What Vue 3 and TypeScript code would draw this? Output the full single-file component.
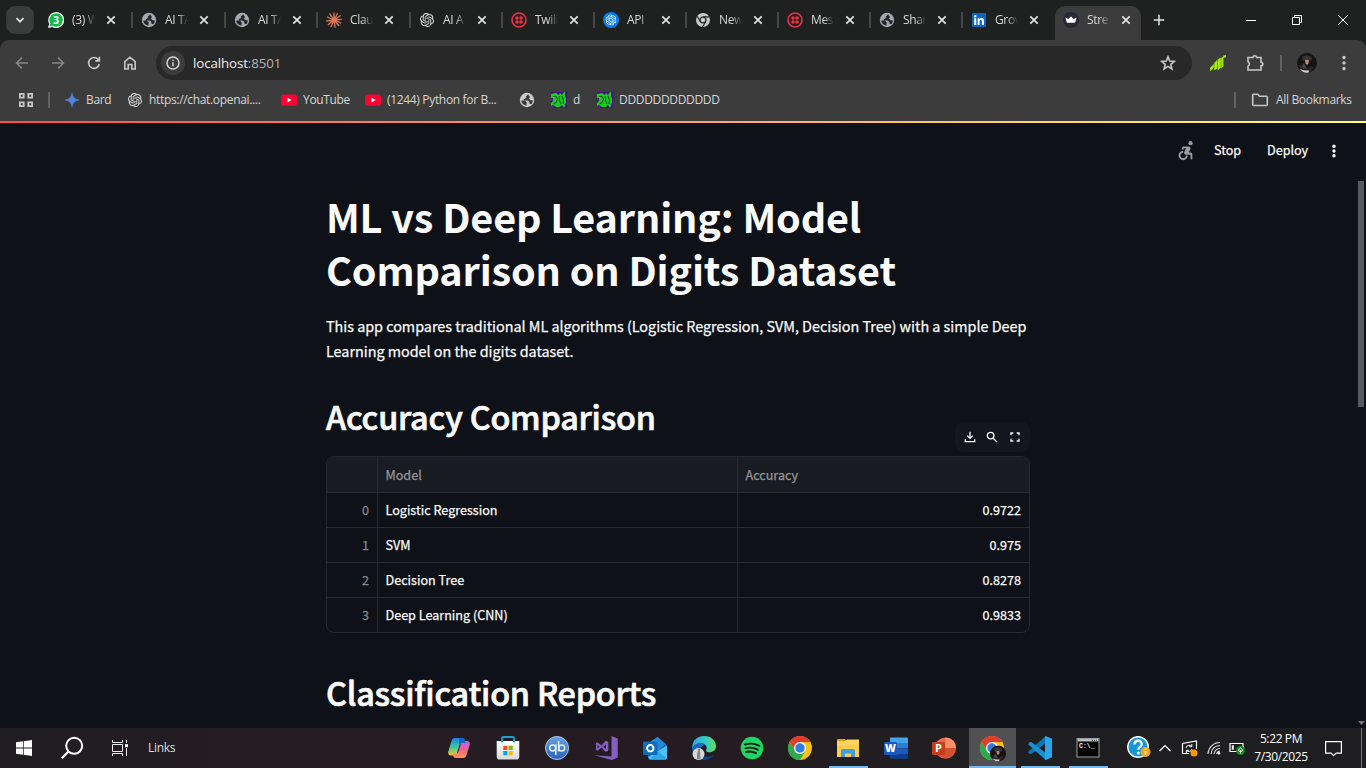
<script setup lang="ts">
interface Tab { icon: string; title: string; active?: boolean }
interface Bookmark { icon: string; title: string }
interface TaskApp { icon: string; state?: 'open' | 'focused' }
interface Row { model: string; accuracy: string }

const tabs: Tab[] = [
  { icon: 'whatsapp', title: '(3) W' },
  { icon: 'globe', title: 'AI TA' },
  { icon: 'globe', title: 'AI TA' },
  { icon: 'claude', title: 'Clau' },
  { icon: 'openai', title: 'AI A' },
  { icon: 'twilio', title: 'Twili' },
  { icon: 'openai-blue', title: 'API' },
  { icon: 'chrome-grey', title: 'New' },
  { icon: 'twilio', title: 'Mes' },
  { icon: 'globe', title: 'Shar' },
  { icon: 'linkedin', title: 'Grov' },
  { icon: 'crown', title: 'Stre', active: true },
]

const bookmarks: Bookmark[] = [
  { icon: 'bard', title: 'Bard' },
  { icon: 'openai', title: 'https://chat.openai....' },
  { icon: 'youtube', title: 'YouTube' },
  { icon: 'youtube', title: '(1244) Python for B...' },
  { icon: 'globe-light', title: '' },
  { icon: 'dn', title: 'd' },
  { icon: 'dn', title: 'DDDDDDDDDDDD' },
]

const apps: TaskApp[] = [
  { icon: 'copilot' }, { icon: 'store' }, { icon: 'qb' }, { icon: 'vs' }, { icon: 'outlook' },
  { icon: 'edge' }, { icon: 'spotify' }, { icon: 'chrome' }, { icon: 'explorer', state: 'open' },
  { icon: 'word' }, { icon: 'powerpoint' }, { icon: 'chrome-profile', state: 'focused' },
  { icon: 'vscode', state: 'open' }, { icon: 'terminal', state: 'open' },
]

const rows: Row[] = [
  { model: 'Logistic Regression', accuracy: '0.9722' },
  { model: 'SVM', accuracy: '0.975' },
  { model: 'Decision Tree', accuracy: '0.8278' },
  { model: 'Deep Learning (CNN)', accuracy: '0.9833' },
]
</script>

<template>
  <div class="screen">
    <svg class="sprite" width="0" height="0" aria-hidden="true">
      <defs>
        <linearGradient id="gBard" x1="0" x2="1"><stop offset="0" stop-color="#9b72cb" /><stop offset=".5" stop-color="#4a86e0" /><stop offset="1" stop-color="#3f8fe0" /></linearGradient>
        <linearGradient id="gCopA" x1="0" y1="0" x2="0" y2="1"><stop offset="0" stop-color="#1b7fe6" /><stop offset=".5" stop-color="#3cc6a0" /><stop offset="1" stop-color="#f6c52c" /></linearGradient>
        <linearGradient id="gCopB" x1="0" y1="0" x2="0" y2="1"><stop offset="0" stop-color="#b065e8" /><stop offset=".5" stop-color="#f0608c" /><stop offset="1" stop-color="#ff9a4d" /></linearGradient>
        <linearGradient id="gQb" x1="0" y1="0" x2="0" y2="1"><stop offset="0" stop-color="#6aa2e6" /><stop offset="1" stop-color="#2a63b8" /></linearGradient>
        <linearGradient id="gEdge" x1="0" y1="0" x2="1" y2="0"><stop offset="0" stop-color="#2aa8e8" /><stop offset=".55" stop-color="#36c9c8" /><stop offset="1" stop-color="#62dd58" /></linearGradient>
        <linearGradient id="gStore" x1="0" y1="0" x2="0" y2="1"><stop offset="0" stop-color="#fff" /><stop offset="1" stop-color="#d9d9db" /></linearGradient>
        <symbol id="whatsapp" viewBox="0 0 16 16"><path d="M0 16 1.200 11.800A8 8 0 1 1 4.300 15z" fill="#fff" /><path d="M1.600 14.400 2.400 11.500A6.700 6.700 0 1 1 4.600 13.700z" fill="#12b84a" /><text x="8" y="11.700" text-anchor="middle" font-family="Open Sans, sans-serif" font-size="10" font-weight="700" fill="#fff">3</text></symbol>
        <symbol id="globe" viewBox="0 0 16 16"><circle cx="8" cy="8" r="7.200" fill="#a4a9b1" /><path d="M2.200 8.600H5.800L7.800 10.600 7.400 13.600C4.500 13.200 2.500 11.500 2.200 8.600zM9.200 2.400 6.800 4.300 7.300 5.800 4.800 7.200 5.200 8.600H8.800L10.500 10.200V11.900H12.600C13.400 11 13.800 9.800 13.700 8.300H11.400L9.900 6.600 11 4.900z" fill="#23272b" /></symbol>
        <symbol id="globe-light" viewBox="0 0 16 16"><circle cx="8" cy="8" r="7.200" fill="#c9cbce" /><path d="M2.200 8.600H5.800L7.800 10.600 7.400 13.600C4.500 13.200 2.500 11.500 2.200 8.600zM9.200 2.400 6.800 4.300 7.300 5.800 4.800 7.200 5.200 8.600H8.800L10.500 10.200V11.900H12.600C13.400 11 13.800 9.800 13.700 8.300H11.400L9.900 6.600 11 4.900z" fill="#3c3c3c" /></symbol>
        <symbol id="claude" viewBox="0 0 16 16"><g stroke="#d97757" stroke-width="1.350" stroke-linecap="round"><path d="M8 8V.8M8 8l3.300-6.200M8 8l6.200-4.300M8 8l7.200-.6M8 8l6.700 2.800M8 8l4.700 5.500M8 8l1 7.200M8 8l-3 6.700M8 8l-5.600 4.500M8 8l-7.200 1M8 8 1.400 5M8 8 3.800 1.800" /></g></symbol>
        <symbol id="oa" viewBox="0 0 24 24"><path d="M22.2819 9.8211a5.9847 5.9847 0 0 0-.5157-4.9108 6.0462 6.0462 0 0 0-6.5098-2.9A6.0651 6.0651 0 0 0 4.9807 4.1818a5.9847 5.9847 0 0 0-3.9977 2.9 6.0462 6.0462 0 0 0 .7427 7.0966 5.98 5.98 0 0 0 .511 4.9107 6.051 6.051 0 0 0 6.5146 2.9001A5.9847 5.9847 0 0 0 13.2599 24a6.0557 6.0557 0 0 0 5.7718-4.2058 5.9894 5.9894 0 0 0 3.9977-2.9001 6.0557 6.0557 0 0 0-.7475-7.0729zm-9.022 12.6081a4.4755 4.4755 0 0 1-2.8764-1.0408l.1419-.0804 4.7783-2.7582a.7948.7948 0 0 0 .3927-.6813v-6.7369l2.02 1.1686a.071.071 0 0 1 .038.052v5.5826a4.504 4.504 0 0 1-4.4945 4.4944zm-9.6607-4.1254a4.4708 4.4708 0 0 1-.5346-3.0137l.142.0852 4.783 2.7582a.7712.7712 0 0 0 .7806 0l5.8428-3.3685v2.3324a.0804.0804 0 0 1-.0332.0615L9.74 19.9502a4.4992 4.4992 0 0 1-6.1408-1.6464zM2.3408 7.8956a4.485 4.485 0 0 1 2.3655-1.9728V11.6a.7664.7664 0 0 0 .3879.6765l5.8144 3.3543-2.0201 1.1685a.0757.0757 0 0 1-.071 0l-4.8303-2.7865A4.504 4.504 0 0 1 2.3408 7.872zm16.5963 3.8558L13.1038 8.364 15.1192 7.2a.0757.0757 0 0 1 .071 0l4.8303 2.7913a4.4944 4.4944 0 0 1-.6765 8.1042v-5.6772a.79.79 0 0 0-.407-.667zm2.0107-3.0231l-.142-.0852-4.7735-2.7818a.7759.7759 0 0 0-.7854 0L9.409 9.2297V6.8974a.0662.0662 0 0 1 .0284-.0615l4.8303-2.7866a4.4992 4.4992 0 0 1 6.6802 4.66zM8.3065 12.863l-2.02-1.1638a.0804.0804 0 0 1-.038-.0567V6.0742a4.4992 4.4992 0 0 1 7.3757-3.4537l-.142.0805L8.704 5.459a.7948.7948 0 0 0-.3927.6813zm1.0976-2.3654l2.602-1.4998 2.6069 1.4998v2.9994l-2.5974 1.4997-2.6067-1.4997Z" /></symbol>
        <symbol id="openai" viewBox="0 0 16 16"><use href="#oa" x="1" y="1" width="14" height="14" fill="#e8e8e8" /></symbol>
        <symbol id="openai-blue" viewBox="0 0 16 16"><circle cx="8" cy="8" r="8" fill="#0a7cf0" /><use href="#oa" x="2.600" y="2.600" width="10.800" height="10.800" fill="#fff" /></symbol>
        <symbol id="twilio" viewBox="0 0 16 16"><circle cx="8" cy="8" r="7" fill="none" stroke="#f22f46" stroke-width="1.600" /><g fill="#f22f46"><circle cx="6" cy="6" r="1.800" /><circle cx="10" cy="6" r="1.800" /><circle cx="6" cy="10" r="1.800" /><circle cx="10" cy="10" r="1.800" /></g></symbol>
        <symbol id="chrome-grey" viewBox="0 0 16 16"><circle cx="8" cy="8" r="7" fill="#c7c9cb" /><path d="M8 4.900h6.300M5.300 9.600 2.200 4.200M10.700 9.600 7.500 15" stroke="#202124" stroke-width="1.100" /><circle cx="8" cy="8" r="3.500" fill="#202124" /><circle cx="8" cy="8" r="2.300" fill="#c7c9cb" /></symbol>
        <symbol id="linkedin" viewBox="0 0 16 16"><rect x="1" y="1" width="14" height="14" rx="1" fill="#0a66c2" /><path d="M3.200 6.300h2V13h-2zM6.600 6.300h1.900v.9c.4-.7 1.100-1.100 2-1.100 1.900 0 2.400 1.200 2.400 3V13h-2V9.500c0-.9-.2-1.600-1-1.600-.9 0-1.300.6-1.300 1.600V13h-2z" fill="#fff" /><circle cx="4.200" cy="4.200" r="1.200" fill="#fff" /></symbol>
        <symbol id="crown" viewBox="0 0 16 16"><circle cx="8" cy="8" r="8" fill="#262738" /><path d="M2.300 5.600 5.300 7 8 4.400 10.700 7l3-1.400-1.600 5.200H3.900z" fill="#fff" /></symbol>
        <symbol id="bard" viewBox="0 0 16 16"><path d="M8 1.300C8.700 5.500 10.500 7.300 14.700 8 10.500 8.700 8.700 10.500 8 14.700 7.300 10.500 5.500 8.700 1.300 8 5.500 7.300 7.300 5.500 8 1.300z" fill="url(#gBard)" stroke="url(#gBard)" stroke-width=".7" /></symbol>
        <symbol id="youtube" viewBox="0 0 16 16"><rect y="2.500" width="16" height="11.200" rx="2.800" fill="#ff0033" /><path d="M6.500 5.700v4.700L10.600 8z" fill="#fff" /></symbol>
        <symbol id="dn" viewBox="0 0 16 16"><rect width="16" height="16" fill="#4b0a8c" /><path d="M0 2 5 1 8 3 9 1 11 3 13 0H14V5L15 6V12L13 16 11 13 9 15H5L2 13 0 14V11L2 9V6H0z" fill="#17cf1f" /><path d="M2 4.500 5 4.500 6.500 7 5 10.500 2.500 12M8.500 4 8.500 9 10 12M11 4 12.500 8 12 12" fill="none" stroke="#145a20" stroke-width="1.200" /><path d="M0 7.500H1.500M14 13 16 10M0 15H3" stroke="#6a18b0" stroke-width="1.300" /></symbol>
        <symbol id="chrome" viewBox="0 0 24 24"><circle cx="12" cy="12" r="12" fill="#fbc116" /><path d="M1.600 6A12 12 0 0 1 22.400 6H12L7 15z" fill="#e33b2e" /><path d="M1.600 6A12 12 0 0 0 12 24l5.200-9-5.200 2-5-2z" fill="#2da94f" /><circle cx="12" cy="12" r="6" fill="#fff" /><circle cx="12" cy="12" r="4.700" fill="#2d7de9" /></symbol>
        <symbol id="avatar" viewBox="0 0 20 20"><circle cx="10" cy="10" r="10" fill="#171313" /><path d="M5 4c3-2 7-2 10 1l-1 3-4-2-4 2z" fill="#39333a" /><path d="m8 7 2.500-.5 1.500 1-.6 3-1.200 1.500-1.700-1.700z" fill="#b98f80" /><path d="m1 12 6 1 3 3 4-3 3 1-3 5c-4 2-9 0-13-7z" fill="#292429" /><path d="M3 15.800c3 1.700 6 2 9 1.700l-.5 2C8 20.500 5 19 3 15.800z" fill="#dad5d7" /><path d="M6.700 10 5 14l5 2z" fill="#53494c" /></symbol>
        <symbol id="chrome-profile" viewBox="0 0 27 26"><use href="#chrome" x="0" y="0" width="24" height="24" /><use href="#avatar" x="10" y="9.500" width="16" height="16" /></symbol>
        <symbol id="copilot" viewBox="0 0 24 24"><path d="M8 2h7c2 0 2.500 1.300 3 3l.5 2h-3c-2 0-2.800 1-3.300 3L10 17c-.6 2-1.500 2.500-3.500 2.500H4C2 19.500.7 18 1.300 15.500L4.500 5C5.200 3 6 2 8 2z" fill="url(#gCopA)" /><path d="M16 22H9c-2 0-2.600-1.300-3-3l-.5-1.500h3c2 0 2.800-1 3.300-3L14 7.500C14.600 5.500 15.500 5 17.500 5H20c2 0 3.300 1.500 2.700 4L19.500 19c-.7 2-1.500 3-3.500 3z" fill="url(#gCopB)" /><path d="M12 2h3c2 0 2.500 1.300 3 3l.5 2H14l-2 1z" fill="#1763cc" /></symbol>
        <symbol id="store" viewBox="0 0 24 24"><path d="M6 6V2.500C6 1.500 6.500 1 7.500 1h9c1 0 1.500.5 1.500 1.500V6" fill="none" stroke="#1a9fd8" stroke-width="1.900" /><path d="M.7 5h22.600v16c0 1.500-1 2.600-2.500 2.600H3.200C1.700 23.600.7 22.500.7 21z" fill="url(#gStore)" /><path d="M6 3.500v3M18 3.500v3" stroke="#1a9fd8" stroke-width="1.900" /><path d="M7.300 9.800h4.200V14H7.300z" fill="#f25022" /><path d="M12.500 9.800h4.200V14h-4.200z" fill="#7fba00" /><path d="M7.300 15h4.200v4.200H7.300z" fill="#00a4ef" /><path d="M12.500 15h4.200v4.200h-4.200z" fill="#ffb900" /></symbol>
        <symbol id="qb" viewBox="0 0 24 24"><circle cx="12" cy="12" r="11.500" fill="url(#gQb)" stroke="#a9c8f0" stroke-width="1" /><g fill="none" stroke="#e7f2ff" stroke-width="1.500"><circle cx="7.700" cy="12" r="3" /><path d="M10.800 8.500V19M13.600 5v10.500" /><circle cx="16.700" cy="12" r="3" /></g></symbol>
        <symbol id="vs" viewBox="0 0 24 24"><path d="m17.500 0 6.200 2.600v18.800L18 24 0 19.300l17.500 1.200z" fill="#865fc5" /><path d="m2 7 1.500-.8 4 3.200 4.200-4.700 2.600 1v9l-2.600 1.200-4.200-4.400-4 3.200L2 14zm1.500 2v3.400l1.800-1.700zm5.800 1.700 2.600 2.200V8.500z" fill="#865fc5" fill-rule="evenodd" /></symbol>
        <symbol id="outlook" viewBox="0 0 24 24"><path d="M5 9 14.500.800 24 9v12.500a2 2 0 0 1-2 2H7a2 2 0 0 1-2-2z" fill="#1066b5" /><path d="m8 5 6.500-4 8 7-8 7L8 13z" fill="#2489d8" /><path d="m5 21 19-11.500V21.500a2 2 0 0 1-2 2H7z" fill="#4cc2f1" /><path d="m14.500 15 9.500 7.500-2 1H7z" fill="#2ba7e8" /><rect y="5.500" width="14.500" height="13.500" rx="1" fill="#0f6cbd" /><circle cx="7.300" cy="12.200" r="3.200" fill="none" stroke="#fff" stroke-width="1.900" /></symbol>
        <symbol id="edge" viewBox="0 0 24 24"><path d="M.5 14C-1 5 5 0 12 0c7.500 0 12 5 12 10.300 0 3.700-3 6-6.500 6-2.500 0-3.800-1-3.300-2.300C16 9 11.500 7.500 9 7.500 4 7.500 1 11 .5 14z" fill="url(#gEdge)" /><path d="M.3 13C1 9.500 4 7 8.500 7c2 0 4 .6 5.200 2-3.800.2-5.700 3.200-5.200 6.500.6 4 4.500 6.500 8.500 6.200-2.500 2-5 2.300-7 2.100C4.500 23.300.3 19 .3 13z" fill="#1668bf" /><path d="M8.500 15c.4 5 6 7 11 5l2.500-1.500c-2 3.500-6 5.500-10.500 5.200C7 22 7 17 8.500 15z" fill="#0d468f" /><circle cx="6.500" cy="18" r="6" fill="#d9d8d5" /><path d="M5 23v-5l.7-2.500 1.300-1 1.400 1.500v7z" fill="#7b8b99" /><circle cx="7" cy="14" r="1.300" fill="#927e73" /></symbol>
        <symbol id="spotify" viewBox="0 0 24 24"><circle cx="12" cy="12" r="11.300" fill="#1ed760" /><path d="M5 8.500c5-1.500 10-1 14.300 1.300M5.500 12.300c4.500-1.200 8.500-.7 12.200 1.400M6 16c3.500-.9 7-.5 10 1.200" fill="none" stroke="#111b15" stroke-width="1.900" stroke-linecap="round" /></symbol>
        <symbol id="explorer" viewBox="0 0 24 24"><path d="M1 5V3.500Q1 3 1.500 3H9l1.500 2z" fill="#e2a100" /><path d="M1 5h8l2-1.500h12V21H1z" fill="#ffd45e" /><path d="M1 9h22v12H1z" fill="#fccb50" /><path d="M5 21v-6.500q0-1.500 1.500-1.500h11q1.500 0 1.500 1.500V21h-4v-3.500H9V21z" fill="#3d9fe0" /></symbol>
        <symbol id="word" viewBox="0 0 24 24"><path d="M6 1.500h17q1 0 1 1V7H6z" fill="#41a5ee" /><path d="M6 7h18v5.500H6z" fill="#2b7cd3" /><path d="M6 12.500h18V18H6z" fill="#185abd" /><path d="M6 18h18v3.700q0 1-1 1H7q-1 0-1-1z" fill="#103f91" /><rect y="6" width="13" height="13" rx="1.200" fill="#185abd" /><text x="6.500" y="16.200" text-anchor="middle" font-family="Open Sans, sans-serif" font-size="10.500" font-weight="800" fill="#fff">W</text></symbol>
        <symbol id="powerpoint" viewBox="0 0 24 24"><circle cx="13.500" cy="12" r="10.500" fill="#ed6c47" /><path d="M13.500 1.500A10.500 10.500 0 0 1 24 12H13.500z" fill="#ff8f6b" /><path d="M3 12h21a10.500 10.500 0 0 1-21 0z" fill="#d35230" /><rect y="6" width="13" height="13" rx="1.200" fill="#c43e1c" /><text x="6.500" y="16.300" text-anchor="middle" font-family="Open Sans, sans-serif" font-size="11" font-weight="700" fill="#fff">P</text></symbol>
        <symbol id="vscode" viewBox="0 0 24 24"><path d="M17.500.3 18.500 6.500 3.200 18 2 18 .3 16.300 .3 15.500z" fill="#0877b9" /><path d="M3.200 6 2 6 .3 7.700 .3 8.500 17.500 23.700 18.500 17.500z" fill="#1593d2" /><path d="M17.500 0 24 2.800v18.500l-6.500 2.600c-.8.1-.5-.4-.5-1V1c0-.6-.2-1 .5-1z" fill="#27a5ee" /></symbol>
        <symbol id="terminal" viewBox="0 0 24 24"><rect x="1" y="2.500" width="22" height="18.500" fill="#050505" stroke="#9c9fa3" /><path d="M1.500 3h21v2.500h-21z" fill="#b9bec4" /><path d="M16 4.300h1m1 0h1m1 0h1" stroke="#444" /><text x="3" y="11.500" font-family="Liberation Mono, monospace" font-size="6.500" font-weight="700" fill="#eee">C:\_</text></symbol>
      </defs>
    </svg>

    <header class="tabstrip">
      <div class="tab-search"><svg width="10" height="10" viewBox="0 0 10 10"><path d="m1.500 3.200 3.500 3.500 3.500-3.500" /></svg></div>
      <div class="tabs">
        <div v-for="(tab, i) in tabs" :key="i" class="tab" :class="{ active: tab.active }">
          <svg class="favicon"><use :href="'#' + tab.icon" /></svg>
          <span class="tab-title">{{ tab.title }}</span>
          <svg class="close" width="10" height="10" viewBox="0 0 10 10"><path d="m1.300 1.300 7.400 7.400m0-7.400L1.300 8.700" /></svg>
        </div>
      </div>
      <svg class="new-tab" width="12" height="12" viewBox="0 0 12 12"><path d="M6 .8v10.400M.8 6h10.400" /></svg>
      <div class="window-controls">
        <svg viewBox="0 0 10 10"><path d="M0 5.500h10" /></svg>
        <svg viewBox="0 0 10 10"><path d="M.5 2.500h7v7h-7zM2.500 2.500v-2h7v7h-2" /></svg>
        <svg viewBox="0 0 10 10"><path d="m0 0 10 10M10 0 0 10" /></svg>
      </div>
    </header>

    <section class="chrome-bars">
      <div class="toolbar">
        <div class="nav">
          <svg class="dim" viewBox="0 0 16 16"><path d="M14 8H2.800M8 2.600 2.600 8 8 13.400" /></svg>
          <svg class="dim" viewBox="0 0 16 16"><path d="M2 8h11.200M8 2.600 13.400 8 8 13.400" /></svg>
          <svg viewBox="0 0 16 16"><path d="M13.300 9A5.400 5.400 0 1 1 12 4.300l1 1.200M13.400 1.800v4.100H9.300" /></svg>
          <svg viewBox="0 0 16 16"><path d="M2.800 14V6.600L8 2.200l5.200 4.400V14H9.800V9.500H6.200V14z" /></svg>
        </div>
        <div class="omnibox">
          <span class="site-info"><svg width="14" height="14" viewBox="0 0 14 14"><circle cx="7" cy="7" r="6" /><path d="M7 6.300v4M7 3.700v1.300" /></svg></span>
          <span class="url">localhost<span>:8501</span></span>
          <svg class="star" width="16" height="16" viewBox="0 0 16 16"><path d="m8 1.800 1.700 4.300 4.600.3-3.500 3 1.100 4.500L8 11.400l-3.900 2.500 1.100-4.500-3.500-3 4.600-.3z" /></svg>
        </div>
        <div class="extensions">
          <svg class="upwork" width="16" height="16" viewBox="0 0 16 16"><path d="M0 13 3.800 9V12.500L1 15.700H0zM4.200 8 7.300 4.800V13.500L4.200 15.500zM7.800 4.500 10.800 2.500V12.500L7.800 15.500zM11.200 3 13.400 1.500V11.500L11.200 13.500zM13 .8 16 0V2L13.800 3z" /></svg>
          <svg class="puzzle" width="18" height="18" viewBox="0 0 18 18"><path d="M2 3.500h5a1.800 1.800 0 0 1 3.600 0H15v4.700a1.800 1.800 0 0 1 0 3.600V16H2v-3.800a2.500 2.500 0 0 0 0-4.500z" /></svg>
          <i class="bar-divider"></i>
          <svg class="avatar" width="20" height="20"><use href="#avatar" /></svg>
          <svg class="menu-dots" width="4" height="16" viewBox="0 0 4 16"><circle cx="2" cy="2.500" r="1.700" /><circle cx="2" cy="8" r="1.700" /><circle cx="2" cy="13.500" r="1.700" /></svg>
        </div>
      </div>
      <div class="bookmarks">
        <svg class="apps-grid" width="16" height="16" viewBox="0 0 16 16"><path d="M1.900 1.900h3.800v3.800H1.900zM10.300 1.900h3.800v3.800h-3.800zM1.900 10.300h3.800v3.800H1.900zM10.300 10.300h3.800v3.800h-3.800z" /></svg>
        <i class="bar-divider"></i>
        <div class="bookmark-list">
          <div v-for="(b, i) in bookmarks" :key="i" class="bookmark">
            <svg class="favicon"><use :href="'#' + b.icon" /></svg><span>{{ b.title }}</span>
          </div>
        </div>
        <i class="bar-divider right"></i>
        <svg class="folder" width="18" height="16" viewBox="0 0 18 16"><path d="M1.700 3.200q0-1 1-1h4l1.800 2h6.800q1 0 1 1v7.300q0 1-1 1H2.700q-1 0-1-1z" /></svg>
        <span class="all-bookmarks">All Bookmarks</span>
      </div>
    </section>

    <main class="page">
      <div class="decoration"></div>
      <div class="app-header">
        <svg class="runner" width="22" height="22" viewBox="0 0 24 24"><circle cx="18" cy="3.500" r="2.300" /><path d="M15 17h-2c0 1.650-1.350 3-3 3s-3-1.350-3-3 1.350-3 3-3v-2c-2.760 0-5 2.240-5 5s2.240 5 5 5 5-2.240 5-5zm3-3.500h-1.860l1.670-3.670C18.420 8.500 17.440 7 15.960 7h-5.200c-.81 0-1.540.47-1.870 1.200L8.220 10l1.920.53.65-1.530H13l-1.830 4.100c-.6 1.330.39 2.900 1.850 2.900H18v5h2v-5.500c0-1.100-.9-2-2-2z" /></svg>
        <span class="stop">Stop</span>
        <span class="deploy">Deploy</span>
        <svg class="app-menu" width="4" height="14" viewBox="0 0 4 14"><circle cx="2" cy="2.200" r="1.700" /><circle cx="2" cy="7" r="1.700" /><circle cx="2" cy="11.800" r="1.700" /></svg>
      </div>
      <div class="content">
        <h1>ML vs Deep Learning: Model<br>Comparison on Digits Dataset</h1>
        <p>This app compares traditional ML algorithms (Logistic Regression, SVM, Decision Tree) with a simple Deep<br>Learning model on the digits dataset.</p>
        <h2>Accuracy Comparison</h2>
        <div class="frame-wrap">
          <div class="frame-tools">
            <svg viewBox="0 0 12 12"><path d="M6 .8v6.400M3.200 4.600 6 7.400l2.800-2.800M1.300 8.200v2.500h9.400V8.200" /></svg>
            <svg viewBox="0 0 12 12"><circle cx="4.600" cy="4.600" r="3.300" /><path d="m7.200 7.200 3.900 3.900" /></svg>
            <svg viewBox="0 0 12 12"><path d="M4.300 2H2v2.300M7.700 2H10v2.300M2 7.700V10h2.300M10 7.700V10H7.700" /></svg>
          </div>
          <div class="frame">
            <div class="row head"><span></span><span>Model</span><span>Accuracy</span></div>
            <div v-for="(r, i) in rows" :key="r.model" class="row">
              <span class="idx">{{ i }}</span><span>{{ r.model }}</span><span class="num">{{ r.accuracy }}</span>
            </div>
          </div>
        </div>
        <h2 class="reports">Classification Reports</h2>
      </div>
      <div class="scroll-thumb"></div>
      <svg class="scroll-down" width="7" height="4" viewBox="0 0 7 4"><path d="M0 0h7L3.500 4z" /></svg>
    </main>

    <footer class="taskbar">
      <div class="task-left">
        <svg width="16" height="16" viewBox="0 0 16 16"><path d="M0 2.300 7 1.300V7.600H0zM7.700 1.200 16 0v7.600H7.700zM0 8.400h7v6.300l-7-1zM7.700 8.400H16V16l-8.300-1.200z" fill="#fff" /></svg>
        <svg width="24" height="24" viewBox="0 0 24 24"><circle cx="14.200" cy="9.800" r="8" fill="none" stroke="#fff" stroke-width="2" /><path d="m8.500 15.500-6.700 6.700" stroke="#fff" stroke-width="2.300" /></svg>
        <svg width="16" height="16" viewBox="0 0 16 16"><path d="M.5 0v2.500h10V0M.5 16v-2.500h10V16M.5 4.500h10v7H.5zM14.500 0v3m0 5v8" fill="none" stroke="#eee" /><path d="M13 4.200h3v3h-3z" fill="#fff" /></svg>
      </div>
      <span class="links">Links</span>
      <div class="task-apps">
        <div v-for="app in apps" :key="app.icon" class="task-app" :class="app.state">
          <svg :class="{ wide: app.icon === 'chrome-profile' }"><use :href="'#' + app.icon" /></svg>
        </div>
      </div>
      <div class="tray">
        <svg width="24" height="24" viewBox="0 0 24 24"><circle cx="11" cy="11" r="10.300" fill="#1698d8" stroke="#fff" stroke-width="1.500" /><path d="M7.500 8.500C7.500 3.500 14.800 3.700 14.800 8c0 2.800-3.500 2.800-3.500 5.700" fill="none" stroke="#fff" stroke-width="2.300" /><circle cx="11.300" cy="17" r="1.500" fill="#fff" /><circle cx="18.500" cy="16" r="5" fill="#f3a81c" /><path d="M18.500 15v4M18.500 12.500V14" stroke="#fff" stroke-width="1.400" /></svg>
        <svg width="12" height="8" viewBox="0 0 12 8"><path d="m.5 7 5.500-5.500L11.500 7" fill="none" stroke="#fff" stroke-width="1.200" /></svg>
        <svg width="17" height="17" viewBox="0 0 17 17"><path d="M8 13.500H1.500v-10L15.500 1v8" fill="none" stroke="#fff" stroke-width="1.200" /><path d="M5 8a3.200 3.200 0 0 1 5.700-1.500M10.800 4v2.700H8.200M11 9a3.200 3.200 0 0 1-5.500 1.500M5.300 13v-2.700h2.500" fill="none" stroke="#fff" /><circle cx="13" cy="13" r="3.500" fill="#ff9800" /></svg>
        <svg width="14" height="14" viewBox="0 0 14 14"><g fill="none" stroke="#e8e8e8" stroke-width="1.100"><path d="M1 13A12 12 0 0 1 13 1.500M4 13a9 9 0 0 1 9-8.500M7 13a6 6 0 0 1 6-5.500" /><path d="M9.700 13a3 3 0 0 1 3.300-2.700" /></g><circle cx="12" cy="12.200" r="1.300" fill="#fff" /></svg>
        <svg width="17" height="14" viewBox="0 0 17 14"><path d="M1 2.500h13v8H1zM14.500 5v3" fill="none" stroke="#fff" stroke-width="1.200" /><path d="M2.800 4.300h2v4.400h-2z" fill="#fff" /><circle cx="11.500" cy="9.500" r="4.500" fill="#128a22" /><path d="M11.500 12.500V9m-1.800.8c0-1.600.8-2.300 1.800-3 1 .7 1.800 1.400 1.800 3l-1.800 1z" fill="none" stroke="#fff" stroke-width=".9" /></svg>
        <div class="clock"><span>5:22 PM</span><span>7/30/2025</span></div>
        <svg width="17" height="17" viewBox="0 0 17 17"><path d="M.6 1.600h15.800v11.500h-5L8.500 15.500 6 13.100H.6z" fill="none" stroke="#fff" stroke-width="1.200" /></svg>
        <i class="show-desktop"></i>
      </div>
    </footer>
  </div>
</template>

<style>
body { background: #0e1117; overflow: hidden; }
</style>

<style scoped>
.screen {
  width: 1366px;
  height: 768px;
  display: flex;
  flex-direction: column;
  overflow: hidden;
  font-family: "Open Sans", "Noto Sans", sans-serif;
  background: #1f2120;
}
.screen * { box-sizing: border-box; }
.sprite { position: absolute; }
.favicon { width: 16px; height: 16px; flex: none; }

.tabstrip { height: 40px; display: flex; align-items: center; flex: none; }
.tab-search {
  width: 28px; height: 28px; margin-left: 6px; border-radius: 9px;
  background: #3a3b3b; display: flex; align-items: center; justify-content: center;
}
.tab-search path, .close path, .new-tab path { fill: none; stroke: #e3e3e3; stroke-width: 1.7; }
.tabs { display: grid; grid-template-columns: 93px 93px 92px 93px repeat(8, 92px); margin-left: 4px; height: 40px; align-items: center; }
.tab { position: relative; display: flex; align-items: center; height: 34px; padding-left: 10px; margin-top: 6px; padding-bottom: 6px; }
.tab + .tab::before { content: ""; width: 2px; height: 16px; background: #454746; margin: 0 8px 0 -10px; }
.tab.active::before { visibility: hidden; }
.tab-title {
  width: 32px; margin-left: 8px; white-space: nowrap; color: #d6d7d7;
  font-size: 12px; letter-spacing: -0.35px; line-height: 16px;
  -webkit-mask-image: linear-gradient(90deg, #000 40%, transparent 72%);
  mask-image: linear-gradient(90deg, #000 40%, transparent 72%);
}
.close { margin-left: 2px; flex: none; }
.tab.active { z-index: 1; }
.tab.active::after {
  content: ""; position: absolute; z-index: -1; left: 2px; top: 0; width: 86px; height: 34px;
  background: #3c3c3c; border-radius: 10px 10px 0 0;
}
.new-tab { margin-left: 8px; }
.new-tab path { stroke-width: 1.5; }
.window-controls { margin-left: auto; display: flex; gap: 36px; padding-right: 18px; }
.window-controls svg { width: 10px; height: 10px; }
.window-controls path { fill: none; stroke: #fff; stroke-width: 1; }

.chrome-bars { height: 81px; flex: none; background: #3c3c3c; border-radius: 9px 9px 0 0; }
.toolbar { height: 46px; display: flex; align-items: center; }
.nav { width: 152px; display: flex; padding-left: 4px; gap: 20px; padding-right: 8px; }
.nav svg { width: 16px; height: 16px; flex: none; }
.nav svg:first-child { margin-left: 10px; }
.nav path, .star path, .puzzle path, .apps-grid path, .folder path { fill: none; stroke: #c7c7c7; stroke-width: 1.6; }
.apps-grid path { stroke-width: 1.8; }
.nav .dim path { stroke: #858585; }
.omnibox { width: 1036px; height: 34px; border-radius: 17px; margin-left: 4px; background: #282828; display: flex; align-items: center; flex: none; padding-left: 5px; }
.site-info { width: 24px; height: 24px; border-radius: 50%; background: #3c3c3c; display: flex; align-items: center; justify-content: center; }
.site-info circle, .site-info path { fill: none; stroke: #d6d6d6; stroke-width: 1.5; }
.url { color: #efefef; font-size: 13.3px; letter-spacing: -0.1px; margin-left: 8px; }
.url span { color: #b4b4b4; }
.star { margin-left: auto; margin-right: 16px; }
.extensions { display: flex; align-items: center; flex: 1; }
.upwork { margin-left: 18px; fill: #a4ec0a; }
.puzzle { margin-left: 20px; }
.bar-divider { width: 2px; height: 16px; background: #626262; }
.extensions .bar-divider { margin-left: 16px; }
.avatar { margin-left: 15px; }
.menu-dots { margin-left: 25px; fill: #c7c7c7; }
.bookmarks { height: 28px; display: flex; align-items: center; font-size: 12px; letter-spacing: -0.33px; color: #d6d6d6; }
.bookmarks span { position: relative; margin-top: -1px; }
.apps-grid { margin-left: 18px; }
.bookmarks .bar-divider { margin-left: 14px; }
.bookmark-list { display: grid; grid-template-columns: 63px 154px 84px 154px 32px 46px 130px; margin-left: 14px; }
.bookmark { display: flex; align-items: center; gap: 6px; white-space: nowrap; }
.bookmarks .bar-divider.right { margin-left: auto; }
.folder { margin-left: 15px; }
.all-bookmarks { margin-left: 7px; width: 90px; white-space: nowrap; }

.page { position: relative; flex: 1; background: #0e1117; overflow: hidden; color: #fafafa; font-family: "Noto Sans CJK SC", "Noto Sans", sans-serif; }
.decoration { height: 2px; background: linear-gradient(90deg, #ff4b4b, #fffd80); }
.app-header { height: 55px; display: flex; align-items: center; justify-content: flex-end; font-size: 12.6px; padding-right: 30px; -webkit-text-stroke: 0.25px currentColor; }
.app-header span { margin-top: -2px; }
.runner { fill: #9b9da1; margin-right: 18px; }
.stop { width: 27px; margin-right: 26px; white-space: nowrap; }
.deploy { width: 41px; margin-right: 24px; white-space: nowrap; }
.app-menu { fill: #fafafa; }
.content { width: 704px; margin: 12px 0 0 326px; }
h1 { margin: 0; font-size: 39.6px; line-height: 52.8px; font-weight: 700; letter-spacing: -0.14px; white-space: nowrap; }
p { margin: 17px 0 0; font-size: 14.4px; line-height: 25.4px; letter-spacing: -0.026px; white-space: nowrap; -webkit-text-stroke: 0.25px currentColor; }
h2 { margin: 31px 0 0; font-size: 32.4px; line-height: 43.2px; font-weight: 500; letter-spacing: -0.22px; white-space: nowrap; -webkit-text-stroke: 0.7px currentColor; }
.frame-wrap { position: relative; margin-top: 18px; }
.frame-tools {
  position: absolute; right: 0; top: -34px; width: 75px; height: 30px; border-radius: 8px;
  background: #13161d; display: flex; align-items: center; gap: 10px; padding: 0 9px;
}
.frame-tools svg { width: 12px; height: 12px; }
.frame-tools svg:last-child { margin-left: 1px; }
.frame-tools path, .frame-tools circle { fill: none; stroke: #fafafa; stroke-width: 1.3; }
.frame { border: 1px solid #27292f; border-radius: 8px; overflow: hidden; font-size: 12.6px; height: 177px; -webkit-text-stroke: 0.25px currentColor; }
.row { display: grid; grid-template-columns: 51px 360px 1fr; height: 35px; line-height: 33px; border-bottom: 1px solid #27292f; }
.row.head { background: #1a1c23; color: #94969b; height: 36px; line-height: 36px; }
.row:last-child { border-bottom: 0; }
.row span { padding: 0 8px; white-space: nowrap; }
.row span + span { padding-left: 7.5px; }
.row span:not(:last-child) { border-right: 1px solid #27292f; }
.row .idx { text-align: right; color: #83868b; }
.row .num { text-align: right; }
.reports { margin-top: 37px; }
.scroll-thumb { position: absolute; left: 1358px; top: 60px; width: 6px; height: 226px; background: #58595c; }
.scroll-down { position: absolute; left: 1358px; bottom: 3px; fill: #777; }

.taskbar { height: 40px; flex: none; display: flex; align-items: center; background: linear-gradient(90deg, #201d22 0%, #251d24 22%, #251c22 45%, #201e21 70%, #1e1e20 100%); }
.task-left { width: 144px; display: grid; grid-template-columns: repeat(3, 48px); justify-items: center; align-items: center; }
.links { margin-left: 4px; width: 286px; color: #dedede; font-size: 12px; letter-spacing: -0.3px; margin-top: -1px; }
.task-apps { display: grid; grid-template-columns: repeat(6, 49px) repeat(8, 48px); height: 40px; flex: none; }
.task-app { display: flex; align-items: center; justify-content: center; border-bottom: 2px solid transparent; }
.task-app svg { width: 24px; height: 24px; margin-top: 2px; }
.task-app svg.wide { width: 27px; height: 26px; margin: 4px 0 0 3px; }
.task-app.open { border-color: #76b9ed; margin: 0 4.5px; }
.task-app.focused { border-color: #76b9ed; background: #515053; margin: 0 0.5px; }
.tray { display: flex; align-items: center; flex: 1; margin-left: 15px; }
.tray > svg { flex: none; }
.tray > svg:nth-child(2) { margin-left: 8px; }
.tray > svg:nth-child(3) { margin-left: 10px; }
.tray > svg:nth-child(4) { margin-left: 9px; }
.tray > svg:nth-child(5) { margin-left: 8px; }
.clock { display: flex; flex-direction: column; align-items: center; width: 56px; margin-left: 7px; color: #fff; font-size: 12px; letter-spacing: -0.38px; line-height: 18px; white-space: nowrap; }
.clock + svg { margin-left: 16px; }
.show-desktop { width: 1px; height: 40px; background: #77777a; margin-left: auto; margin-right: 4px; }
</style>
